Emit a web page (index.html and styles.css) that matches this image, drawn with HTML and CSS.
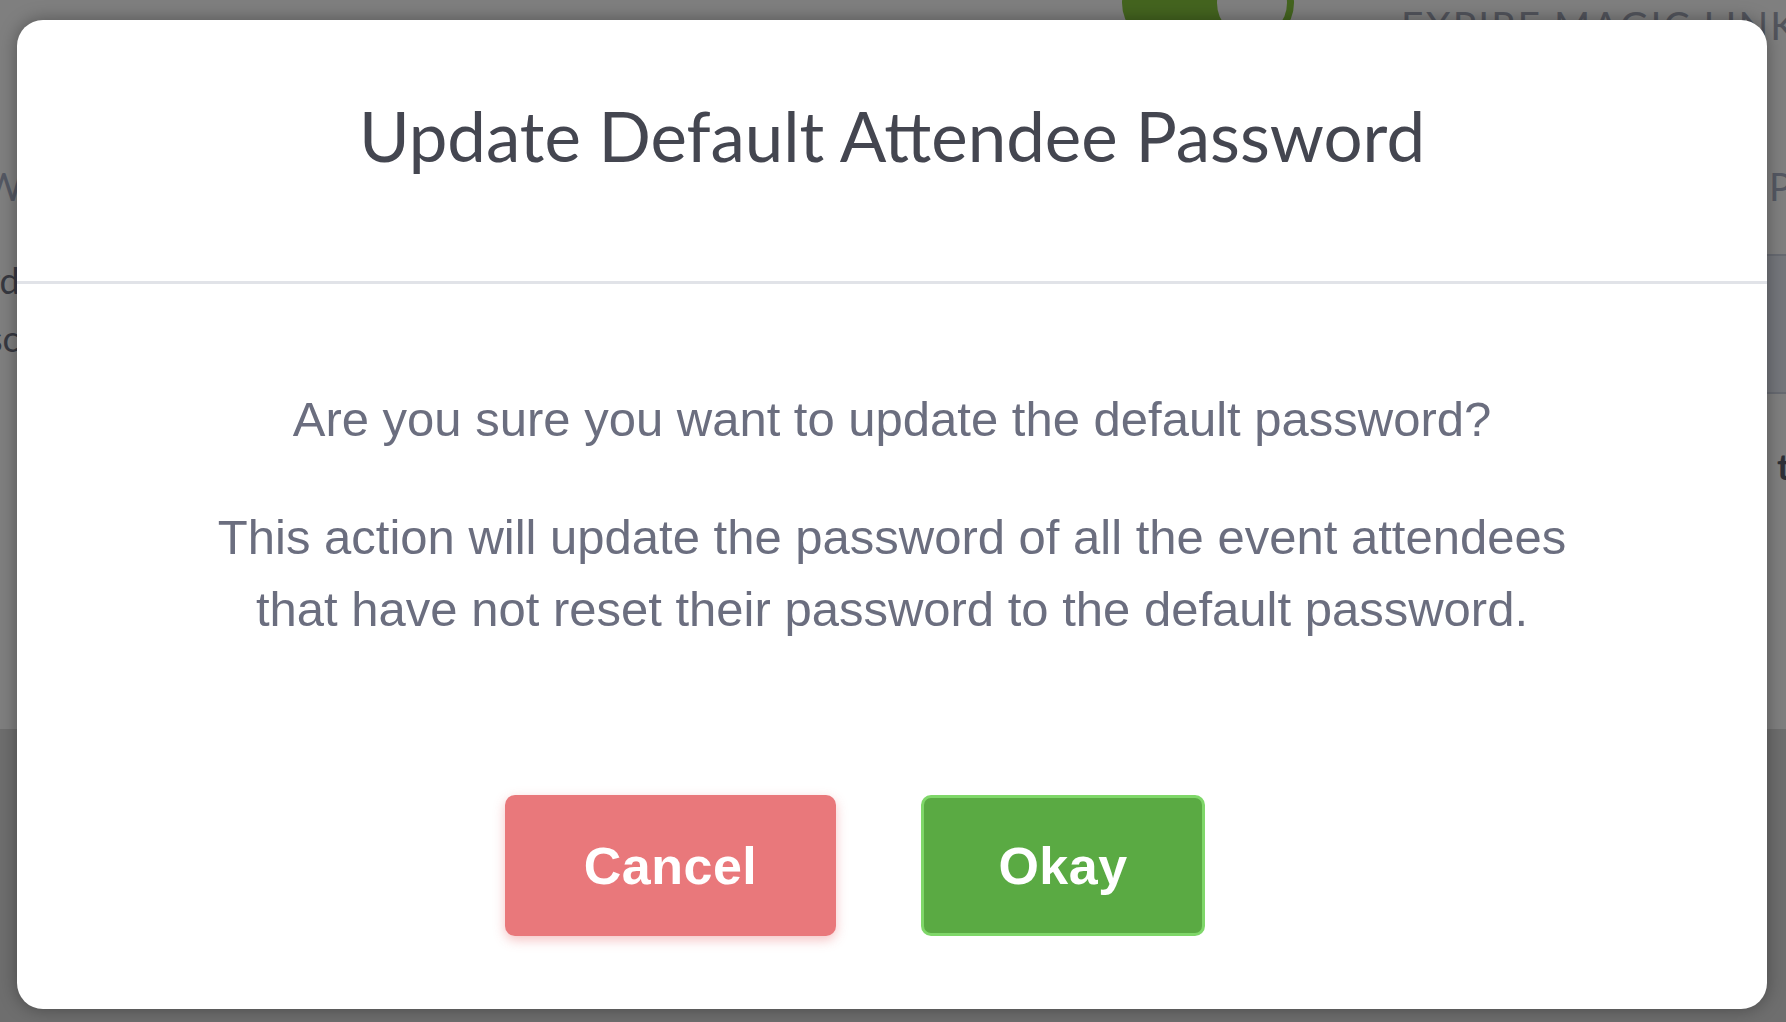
FILE: index.html
```html
<!DOCTYPE html>
<html lang="en">
<head>
<meta charset="utf-8">
<title>Update Default Attendee Password</title>
<link rel="stylesheet" href="styles.css">
</head>
<body>
<div class="page">
  <div class="topbar">
    <div class="toggle"><span class="knob"></span></div>
    <span class="expire">EXPIRE MAGIC LINK</span>
  </div>
  <div class="content">
    <div class="left-col">
      <div class="lbl">W</div>
      <p class="txt">rd</p>
      <p class="txt">sc</p>
    </div>
    <div class="right-col">
      <div class="lbl">P</div>
      <div class="band"></div>
      <p class="txt">t</p>
    </div>
  </div>
  <div class="page-foot"></div>
</div>
<div class="overlay"></div>
<div class="modal" role="dialog">
  <div class="modal-header">
    <h1 class="modal-title">Update Default Attendee Password</h1>
  </div>
  <div class="modal-body">
    <p class="msg">Are you sure you want to update the default password?</p>
    <p class="msg">This action will update the password of all the event attendees<br>that have not reset their password to the default password.</p>
  </div>
  <div class="modal-footer">
    <button class="btn btn-cancel">Cancel</button>
    <button class="btn btn-okay">Okay</button>
  </div>
</div>
</body>
</html>
```
FILE: styles.css
```css
html, body {
  margin: 0;
  padding: 0;
  width: 1786px;
  height: 1022px;
  overflow: hidden;
  background: #ffffff;
}

.page {
  width: 1786px;
  height: 1022px;
  display: flex;
  flex-direction: column;
  font-family: "Lato", "Liberation Sans", sans-serif;
}

.topbar {
  display: flex;
  align-items: center;
  height: 90px;
  margin-top: -42px;
  padding-left: 1122px;
  flex-shrink: 0;
}

.toggle {
  flex-shrink: 0;
  width: 172px;
  height: 84px;
  border-radius: 42px;
  background: #88c83f;
  display: flex;
  align-items: center;
  justify-content: flex-end;
  box-sizing: border-box;
  padding-right: 7px;
}

.knob {
  width: 70px;
  height: 70px;
  border-radius: 50%;
  background: #ffffff;
}

.expire {
  flex-shrink: 0;
  margin-left: 107px;
  margin-top: 44px;
  font-family: "Lato", sans-serif;
  font-weight: 400;
  font-size: 39px;
  letter-spacing: 2px;
  color: #a4a9b8;
  white-space: nowrap;
}

.content {
  flex: 0 0 681px;
  display: flex;
  justify-content: space-between;
}

.left-col {
  width: 40px;
  margin-left: -10px;
  padding-top: 118px;
}

.right-col {
  width: 60px;
  padding-top: 118px;
}

.lbl {
  font-size: 38px;
  color: #a9b0c6;
  line-height: 40px;
  height: 40px;
}

.txt {
  margin: 0;
  font-size: 36px;
  color: #6f7282;
  line-height: 58px;
}

.left-col .lbl { margin-left: -6px; }
.left-col .txt:first-of-type { margin-top: 45px; }
.left-col .txt { margin-left: -3px; }

.right-col .lbl { margin-left: 43px; }

.band {
  margin-top: 48px;
  margin-left: -20px;
  height: 136px;
  border-top: 2px solid #cfd5e2;
  border-bottom: 2px solid #cfd5e2;
  background: #e9edf6;
}

.right-col .txt {
  margin-top: 43px;
  margin-left: 51px;
  color: #5d606e;
  font-weight: 700;
}

.page-foot {
  flex: 1;
  background: #dcdcdd;
}

.overlay {
  position: fixed;
  inset: 0;
  background: rgba(0, 0, 0, 0.5);
}

.modal {
  position: absolute;
  left: 17px;
  top: 20px;
  width: 1750px;
  height: 989px;
  background: #ffffff;
  border-radius: 26px;
  box-shadow: 0 0 18px rgba(0, 0, 0, 0.35);
  display: flex;
  flex-direction: column;
}

.modal-header {
  height: 264px;
  border-bottom: 3px solid #e1e3e8;
  display: flex;
  align-items: flex-start;
  justify-content: center;
  box-sizing: border-box;
  flex-shrink: 0;
}

.modal-title {
  margin: 0;
  margin-top: 71px;
  font-family: "Lato", "Open Sans", sans-serif;
  font-weight: 400;
  font-size: 69px;
  line-height: 90px;
  color: #444650;
}

.modal-body {
  padding-top: 99px;
  text-align: center;
  font-family: "Liberation Sans", Arial, sans-serif;
  color: #6b6e7f;
}

.msg {
  margin: 0 0 46px 0;
  font-size: 49px;
  line-height: 72px;
}

.modal-footer {
  display: flex;
  justify-content: center;
  gap: 85px;
  padding-top: 104px;
  padding-right: 74px;
}

.btn {
  height: 141px;
  border-radius: 10px;
  font-family: "Liberation Sans", Arial, sans-serif;
  font-weight: 700;
  font-size: 52px;
  color: #ffffff;
  letter-spacing: 0.5px;
  cursor: pointer;
  box-sizing: border-box;
}

.btn-cancel {
  width: 331px;
  background: #e9787b;
  border: none;
  box-shadow: 0 4px 12px rgba(233, 120, 123, 0.45);
}

.btn-okay {
  width: 284px;
  background: #5aaa43;
  border: 3px solid #7fd769;
}
```
